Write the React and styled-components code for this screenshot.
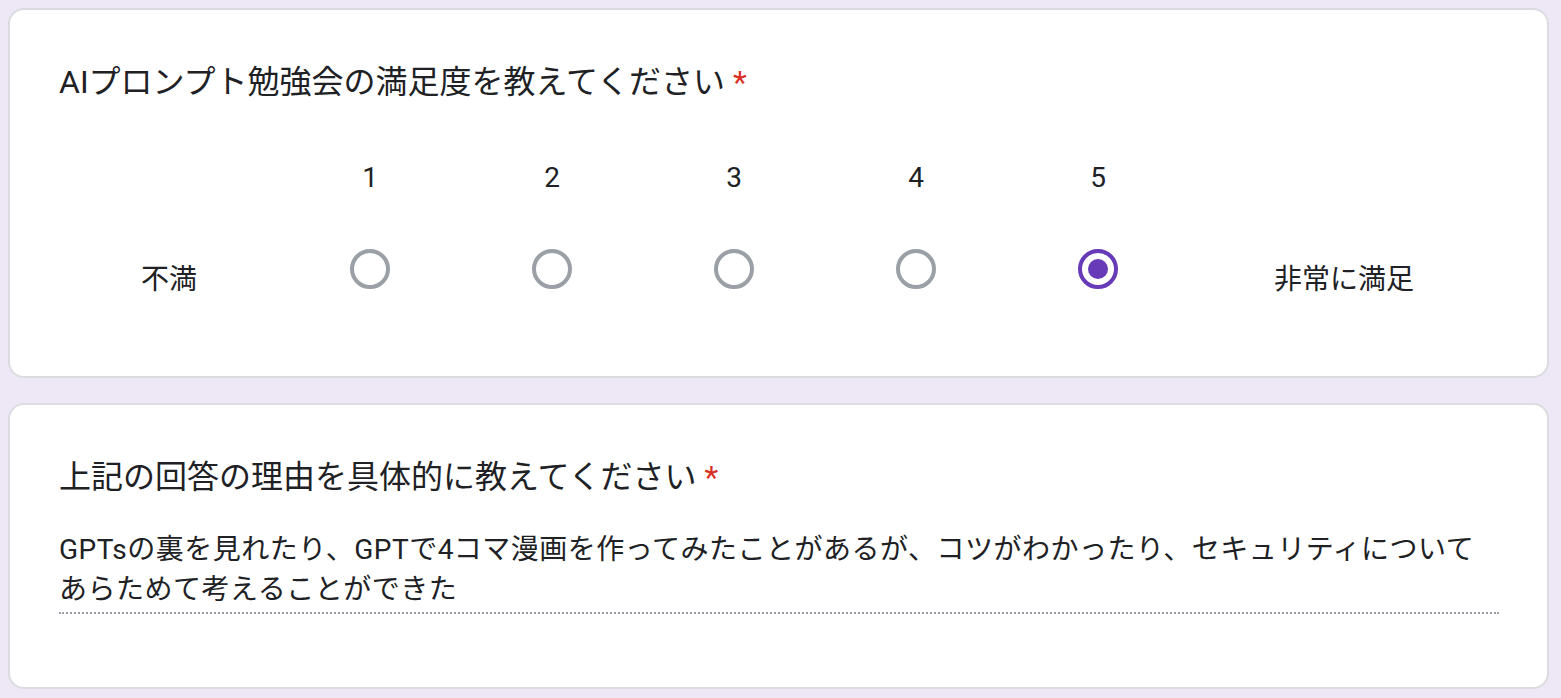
import styled, { createGlobalStyle } from "styled-components";

const GlobalStyle = createGlobalStyle`
  body {
    margin: 0;
    background: #ede7f6;
    font-family: Roboto, "Noto Sans CJK JP", sans-serif;
    color: #202124;
  }
`;

const Page = styled.div`
  display: flex;
  flex-direction: column;
  gap: 25px;
  padding: 8px 0 0 8px;
  width: 1541px;
`;

const Card = styled.div`
  background: #fff;
  border: 2px solid #dadce0;
  border-radius: 16px;
  padding: 48px 48px ${(p) => p.$bottom || 48}px 49px;
`;

const Title = styled.div`
  font-size: 32px;
  line-height: 48px;
`;

const Required = styled.span`
  color: #d93025;
  margin-left: 8px;
`;

const ScaleRow = styled.div`
  display: flex;
  align-items: flex-start;
  margin-top: 48px;
`;

const EndLabel = styled.div`
  width: ${(p) => p.$width}px;
  flex: ${(p) => (p.$grow ? 1 : "none")};
  text-align: center;
  font-size: 28px;
  line-height: 40px;
  padding-top: 106px;
`;

const Option = styled.div`
  width: 182px;
  display: flex;
  flex-direction: column;
  align-items: center;
`;

const Num = styled.div`
  height: 48px;
  line-height: 48px;
  font-size: 28px;
`;

const RadioArea = styled.div`
  padding: 47px 0 39px;
`;

const Radio = styled.div`
  width: 40px;
  height: 40px;
  box-sizing: border-box;
  border-radius: 50%;
  border: 4px solid ${(p) => (p.$checked ? "#673ab7" : "#9aa0a6")};
  display: flex;
  align-items: center;
  justify-content: center;

  &::after {
    content: "";
    display: ${(p) => (p.$checked ? "block" : "none")};
    width: 20px;
    height: 20px;
    border-radius: 50%;
    background: #673ab7;
  }
`;

const Answer = styled.div`
  margin-top: 29px;
  font-size: 28px;
  line-height: 40px;
  letter-spacing: 0.5px;
  border-bottom: 2px dotted #9aa0a6;
  padding-bottom: 2px;
  margin-bottom: 24px;
`;

const App = () => {
  const values = [1, 2, 3, 4, 5];
  const selected = 5;

  return (
    <>
      <GlobalStyle />
      <Page>
        <Card>
          <Title>
            AIプロンプト勉強会の満足度を教えてください<Required>*</Required>
          </Title>
          <ScaleRow>
            <EndLabel $width={220}>不満</EndLabel>
            {values.map((v) => (
              <Option key={v}>
                <Num>{v}</Num>
                <RadioArea>
                  <Radio $checked={v === selected} />
                </RadioArea>
              </Option>
            ))}
            <EndLabel $grow>非常に満足</EndLabel>
          </ScaleRow>
        </Card>
        <Card $bottom={49}>
          <Title>
            上記の回答の理由を具体的に教えてください<Required>*</Required>
          </Title>
          <Answer>
            GPTsの裏を見れたり、GPTで4コマ漫画を作ってみたことがあるが、コツがわかったり、セキュリティについて
            <br />
            あらためて考えることができた
          </Answer>
        </Card>
      </Page>
    </>
  );
};

export default App;
